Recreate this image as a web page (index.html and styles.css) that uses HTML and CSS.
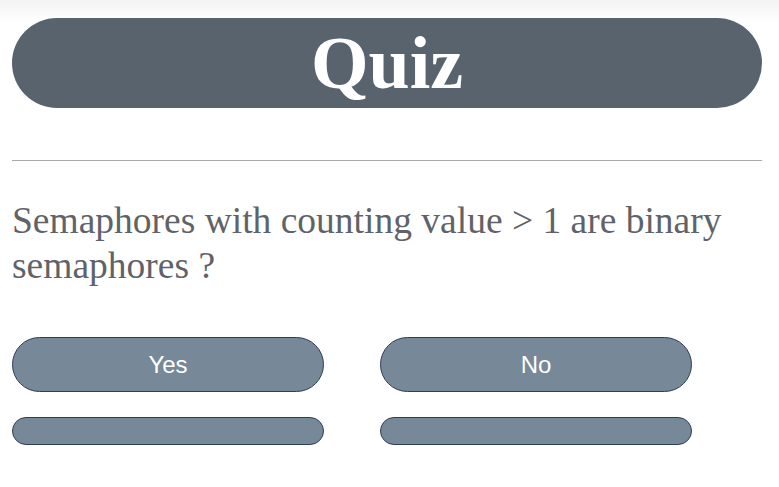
FILE: index.html
```html
<!DOCTYPE html>
<html>
<head>
<meta charset="utf-8">
<link rel="stylesheet" href="styles.css">
</head>
<body>
<div class="page">
  <header class="title-bar"><h1 class="title">Quiz</h1></header>
  <hr class="divider">
  <p class="question">Semaphores with counting value &gt; 1 are binary semaphores ?</p>
  <div class="answers">
    <button class="answer">Yes</button>
    <button class="answer">No</button>
    <button class="answer slim"></button>
    <button class="answer slim"></button>
  </div>
</div>
</body>
</html>
```
FILE: styles.css
```css
html, body {
  margin: 0;
  padding: 0;
}
body {
  background: linear-gradient(#f3f3f3 0px, #ffffff 22px);
  min-height: 487px;
  font-family: "Liberation Serif", "Times New Roman", serif;
}
.page {
  padding: 18px 17px 0 12px;
}
.title-bar {
  background: #59636d;
  border-radius: 45px;
  height: 90px;
  display: flex;
  justify-content: center;
}
.title {
  margin: 0;
  color: #ffffff;
  font-size: 74px;
  line-height: 90px;
  font-weight: bold;
  font-family: "Liberation Serif", "Times New Roman", serif;
}
.divider {
  margin: 52px 0 0 0;
  border: 0;
  border-top: 1px solid #a9a9a9;
  height: 0;
}
.question {
  margin: 37px 0 0 0;
  font-size: 37.5px;
  line-height: 45px;
  color: #5f6369;
}
.answers {
  margin-top: 49px;
  display: grid;
  grid-template-columns: 312px 312px;
  column-gap: 56px;
  row-gap: 25px;
}
.answer {
  height: 55px;
  background: #778899;
  border: 1px solid #2f3e52;
  border-radius: 28px;
  color: #ffffff;
  font-family: "Liberation Sans", Arial, sans-serif;
  font-size: 24px;
  padding: 0;
}
.answer.slim {
  height: 28px;
  border-radius: 14px;
}
```
